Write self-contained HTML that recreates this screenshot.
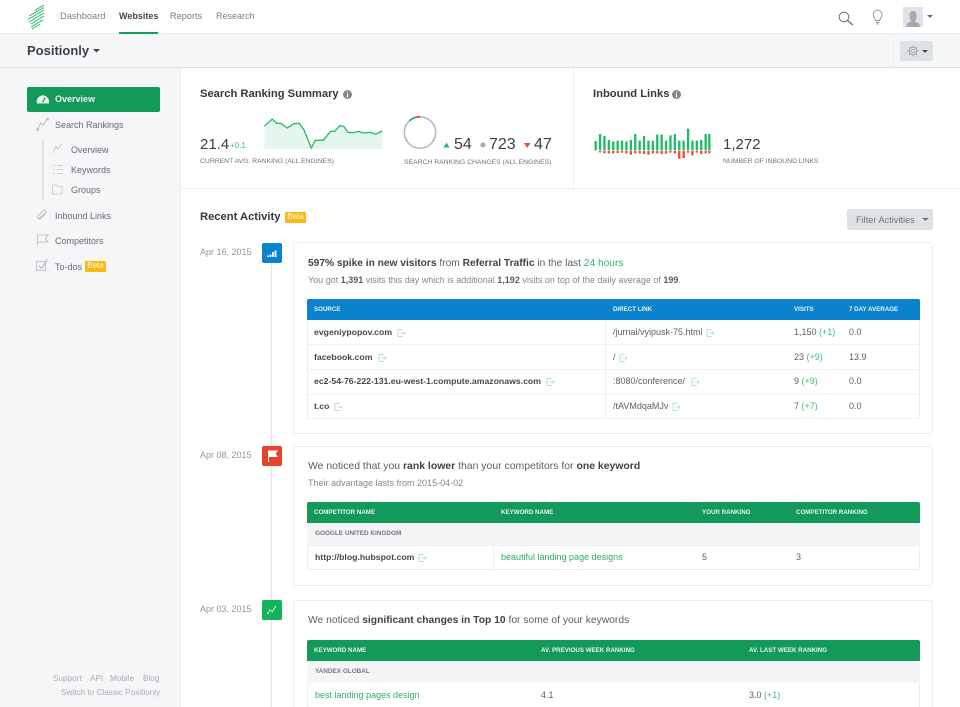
<!DOCTYPE html>
<html><head><meta charset="utf-8"><style>
html,body{margin:0;padding:0;width:960px;height:707px;overflow:hidden;background:#fff}
body{position:relative;font-family:"Liberation Sans",sans-serif;color:#3f434b;font-size:9px}
.t{position:absolute;white-space:nowrap;line-height:12px}
.b{position:absolute}
b{font-weight:700}
.g{color:#3bbf73}
.nav{font-size:9.3px;color:#7b8087}
.side{font-size:9px;color:#666b73}
.h{font-size:11.2px;font-weight:700;color:#33373e}
.cap{font-size:6.8px;color:#6e727a}
.num{font-size:16px;line-height:16px;color:#3a3e45}
.th{font-size:6.2px;font-weight:700;color:#e8f3ee}
.td{font-size:9px;color:#5c6068}
.tb{font-size:8.7px;font-weight:700;color:#44484f}
.date{font-size:9px;color:#92969c}
.card{position:absolute;left:293px;width:640px;background:#fff;border:1px solid #eeeff1;border-radius:2px;box-sizing:border-box}
.sub{font-size:9px;color:#83878e}
.head{font-size:10.2px;color:#5a5e66}
.head b{color:#3f434b}
.beta{position:absolute;background:#fdb813;color:#fff;font-size:8px;line-height:10px;height:11px;border-radius:1px;text-align:center}
.foot{font-size:8.2px;color:#a9acb1}
.gl{font-size:6.4px;font-weight:700;color:#73777e}
</style></head><body>

<div class="b" style="left:0;top:0;width:960px;height:34px;background:#fff"></div>
<div class="b" style="left:0;top:33px;width:960px;height:35px;background:#f6f7f8;border-top:1px solid #eeeff0;border-bottom:1px solid #dcdde0;box-sizing:border-box"></div>
<div class="b" style="left:0;top:68px;width:181px;height:639px;background:#f5f6f8;border-right:1px solid #eaebed;box-sizing:border-box"></div>
<div class="b" style="left:119px;top:32px;width:39px;height:2px;background:#13a05a"></div>
<div class="b" style="left:893px;top:34px;width:1px;height:33px;background:#eeeff0"></div>
<div class="b" style="left:900px;top:41px;width:33px;height:20px;background:#dfe2e5;border-radius:2px"></div>
<div class="b" style="left:181px;top:188px;width:779px;height:1px;background:#eeeff1"></div>
<div class="b" style="left:573px;top:68px;width:1px;height:120px;background:#eeeff1"></div>
<div class="b" style="left:27px;top:87px;width:133px;height:25px;background:#13995a;border-radius:2px"></div>
<div class="b" style="left:42px;top:140px;width:1.5px;height:60px;background:#dfe1e5"></div>
<div class="b" style="left:847px;top:209px;width:86px;height:21px;background:#dfe2e5;border-radius:2px"></div>
<div class="b" style="left:271px;top:262px;width:1px;height:445px;background:#dfe3ee"></div>

<div class="b" style="left:262px;top:243px;width:20px;height:20px;background:#0a82cd;border-radius:2px"></div>
<div class="b" style="left:262px;top:446px;width:20px;height:20px;background:#e8432f;border-radius:2px"></div>
<div class="b" style="left:262px;top:600px;width:20px;height:20px;background:#13b25f;border-radius:2px"></div>

<div class="card" style="top:242px;height:192px"></div>
<div class="card" style="top:446px;height:140px"></div>
<div class="card" style="top:600px;height:120px"></div>

<!-- table 1 -->
<div class="b" style="left:307px;top:299px;width:613px;height:21px;background:#0a82cd;border-radius:2px 2px 0 0"></div>
<div class="b" style="left:307px;top:320px;width:613px;height:99px;border:1px solid #eeeff1;border-top:0;box-sizing:border-box"></div>
<div class="b" style="left:308px;top:344px;width:611px;height:1px;background:#f0f1f3"></div>
<div class="b" style="left:308px;top:369px;width:611px;height:1px;background:#f0f1f3"></div>
<div class="b" style="left:308px;top:394px;width:611px;height:1px;background:#f0f1f3"></div>
<div class="b" style="left:605px;top:320px;width:1px;height:98px;background:#eeeff1"></div>

<!-- table 2 -->
<div class="b" style="left:307px;top:502px;width:613px;height:21px;background:#13995a;border-radius:2px 2px 0 0"></div>
<div class="b" style="left:307px;top:523px;width:613px;height:22px;background:#f4f5f7"></div>
<div class="b" style="left:307px;top:545px;width:613px;height:25px;border:1px solid #eeeff1;box-sizing:border-box"></div>
<div class="b" style="left:493px;top:545px;width:1px;height:25px;background:#eeeff1"></div>

<!-- table 3 -->
<div class="b" style="left:307px;top:640px;width:613px;height:21px;background:#13995a;border-radius:2px 2px 0 0"></div>
<div class="b" style="left:307px;top:661px;width:613px;height:22px;background:#f4f5f7"></div>
<div class="b" style="left:307px;top:683px;width:613px;height:24px;border-left:1px solid #eeeff1;border-right:1px solid #eeeff1;box-sizing:border-box"></div>

<svg class="b" style="left:0;top:0" width="960" height="707" viewBox="0 0 960 707" fill="none">
<!-- logo -->
<path d="M35 10.400 L44 5 M29 16 L44 7.500 M28 19.500 L44 10 M29 22 L44 13 M31 24 L44 16 M31 27 L43 19.800 M32 29 L40 24" stroke="#1fb56a" stroke-width="1"/>
<!-- search -->
<g stroke="#7a7e85"><circle cx="844" cy="17" r="4.800" stroke-width="1.100"/><path d="M847.600 20.600 L853 25" stroke-width="1.500"/></g>
<!-- bulb -->
<g stroke="#8b8f95" stroke-width=".9"><path d="M875.500 20.500 C875.500 18.500 873.200 17.500 873.200 14.500 A4.400 4.400 0 0 1 882 14.500 C882 17.500 879.700 18.500 879.700 20.500 Z"/><path d="M875.800 22.500 H879.400 M876.500 24 H878.700"/></g>
<!-- avatar -->
<rect x="903" y="7" width="20" height="20" fill="#dfe3e8"/>
<path d="M906 27 C906 23 909 22.500 911 21.500 C910 19.500 909.500 18 909.500 15.500 C909.500 12.500 911 11 913 11 C915 11 916.500 12.500 916.500 15.500 C916.500 18 916 19.500 915 21.500 C917 22.500 920 23 920 27 Z" fill="#a7abb1"/>
<path d="M927 15 H933 L930 18 Z" fill="#6a6e75"/>
<!-- gear -->
<circle cx="913" cy="51" r="3.800" stroke="#9a9ea4" stroke-width=".9"/><circle cx="913" cy="51" r="1.600" stroke="#9a9ea4" stroke-width=".7"/>
<path d="M913 45.500 V47.200 M913 54.800 V56.500 M907.500 51 H909.200 M916.800 51 H918.500 M909.100 47.100 L910.300 48.300 M915.700 53.700 L916.900 54.900 M916.900 47.100 L915.700 48.300 M910.300 53.700 L909.100 54.900" stroke="#9a9ea4" stroke-width=".9"/>
<path d="M922 50 H928 L925 52.700 Z" fill="#3f434b"/>
<path d="M93 49 H100 L96.500 52.500 Z" fill="#444"/>
<path d="M922 218 H929 L925.500 220.800 Z" fill="#686c73"/>
<!-- overview gauge -->
<path d="M37 103.500 A6.200 6.200 0 1 1 48.800 103.500 Z" fill="#e8f6ef"/><path d="M42.500 102.500 L45 97.500" stroke="#13995a" stroke-width="1.200"/>
<!-- side icons -->
<g stroke="#b0b4ba" stroke-width=".8">
<path d="M37.500 129.500 L41 122.500 L43 125.500 L47 119"/><circle cx="37.500" cy="129.500" r=".9"/><circle cx="47.500" cy="119" r=".9"/>
<path d="M53 153 L56 146.500 L58 149 L61.500 144" stroke="#bcc0c5"/>
<path d="M57 165.500 H63 M57 169.500 H63 M57 173.500 H63 M53 165.500 H55 M53 169.500 H55 M53 173.500 H55" stroke="#c2c6cb"/>
<path d="M52.500 185 H57 L58 186.500 H62 V194 H52.500 Z" stroke="#c2c6cb"/>
<path d="M38.500 219 L46 212.500 A1.700 1.700 0 0 0 43.500 210.500 L38 216 A1.700 1.700 0 0 0 40.500 218.500 L45 214"/>
<path d="M37.500 245.500 V235 H48 L45.500 238.500 L48 242 H38"/>
<path d="M36.500 261.500 H45.500 V270.500 H36.500 Z"/><path d="M39 265.500 L41.500 268.500 L47.500 259" stroke-width="1"/>
</g>
<!-- info icons -->
<circle cx="347.500" cy="94.500" r="4.500" fill="#83878e"/><circle cx="676.500" cy="94.500" r="4.500" fill="#83878e"/>
<path d="M347.500 93.500 V97.500 M347.500 91.500 V92.500 M676.500 93.500 V97.500 M676.500 91.500 V92.500" stroke="#fff" stroke-width="1"/>
<!-- sparkline -->
<g transform="translate(180 70) scale(.3333)">
<path d="M253 168 L277 147 L290 160 L302 160 L322 174 L342 161 L358 160 L372 180 L394 234 L406 211 L430 211 L452 184 L464 184 L480 167 L492 170 L504 187 L520 188 L536 184 L548 189 L572 187 L586 193 L607 183 V237 H253 Z" fill="#e5f6ec"/>
<path d="M253 168 L277 147 L290 160 L302 160 L322 174 L342 161 L358 160 L372 180 L394 234 L406 211 L430 211 L452 184 L464 184 L480 167 L492 170 L504 187 L520 188 L536 184 L548 189 L572 187 L586 193 L607 183" stroke="#24bd68" stroke-width="4"/>
</g>
<!-- donut -->
<circle cx="420" cy="132.500" r="15.700" stroke="#b4b9c0" stroke-width="1.600"/>
<path d="M409.500 120.800 A15.700 15.700 0 0 1 416 117.300" stroke="#24bd68" stroke-width="1.800"/>
<path d="M415.500 117.400 A15.700 15.700 0 0 1 420 116.800" stroke="#ee4a33" stroke-width="1.800"/>
<path d="M443.500 147.500 H449.500 L446.500 142.500 Z" fill="#1fb56a"/>
<circle cx="483" cy="145" r="2.500" fill="#a7abb1"/>
<path d="M524 143 H530.500 L527.200 148 Z" fill="#ee4a33"/>
<!-- bars -->
<g transform="translate(570 70) scale(.3333)">
<path stroke-width="7" stroke="#1fbb64" d="M77 213V241M90.200 192V241M103.400 198V241M116.600 210V241M129.800 214V241M143 212V241M156.200 212V241M169.400 214V241M182.600 210V241M195.800 192V241M209 212V241M222.200 198V241M235.400 212V241M248.600 212V241M261.800 194V241M275 194V241M288.200 212V241M301.400 196V241M314.600 192V241M327.800 212V241M341 212V241M354.200 176V241M367.400 212V241M380.600 212V241M393.800 210V241M407 192V241M418 192V241"/>
<path stroke-width="7" stroke="#ee4a33" d="M90.200 243V247M103.400 243V250M116.600 243V250M129.800 243V250M143 243V249M156.200 243V248M169.400 243V250M182.600 243V254M195.800 243V250M209 243V250M222.200 243V252M235.400 243V254M248.600 243V250M261.800 243V250M275 243V252M288.200 243V251M301.400 243V248M314.600 243V250M327.800 243V266M341 243V264M354.200 243V248M367.400 243V256M380.600 243V248M393.800 243V252M407 243V250M418 243V250"/>
</g>
<!-- timeline icons -->
<path d="M268 257 V255.500 M270.500 257 V254.500 M273 257 V252 M275.500 257 V250.500" stroke="#fff" stroke-width="1.800"/>
<path d="M268.500 462 V451 H277 L275 453.500 L277 456.500 H268.500" fill="#fff" stroke="#fff" stroke-width="1"/>
<path d="M267.500 614 L270 610 L272.500 611.500 L276 605.500" stroke="#fff" stroke-width="1.200" stroke-dasharray="2 1"/>
<!-- link icons -->
<g stroke="#a8dcc0" stroke-width=".8">
<path id="l" d="M403 329.500 H398 V336.500 H403 M400.500 333 H405 M403.500 331.500 L405 333 L403.500 334.500"/>
<use href="#l" x="-19" y="25"/>
<use href="#l" x="149" y="49"/>
<use href="#l" x="-63" y="74"/>
<use href="#l" x="309" y="0"/>
<use href="#l" x="222" y="25"/>
<use href="#l" x="294" y="49"/>
<use href="#l" x="275" y="74"/>
<use href="#l" x="21" y="225"/>
</g>
</svg>

<!-- top nav -->
<div class="t nav" style="left:60px;top:10px">Dashboard</div>
<div class="t nav" style="left:119px;top:10px;color:#43474e;font-weight:700;font-size:9px">Websites</div>
<div class="t nav" style="left:170px;top:10px;font-size:9.2px">Reports</div>
<div class="t nav" style="left:216px;top:10px;font-size:9px">Research</div>
<div class="t" style="left:27px;top:43px;font-size:13px;font-weight:700;line-height:15px;color:#3a3e45">Positionly</div>

<!-- sidebar -->
<div class="t" style="left:55px;top:93px;font-size:9px;font-weight:700;color:#eaf6f0">Overview</div>
<div class="t side" style="left:55px;top:119px">Search Rankings</div>
<div class="t side" style="left:71px;top:144px">Overview</div>
<div class="t side" style="left:71px;top:164px">Keywords</div>
<div class="t side" style="left:71px;top:184px">Groups</div>
<div class="t side" style="left:55px;top:210px">Inbound Links</div>
<div class="t side" style="left:55px;top:235px">Competitors</div>
<div class="t side" style="left:55px;top:261px">To-dos</div>
<div class="beta" style="left:85px;top:261px;width:21px">Beta</div>
<div class="t foot" style="left:53px;top:673px">Support</div>
<div class="t foot" style="left:90px;top:673px">API</div>
<div class="t foot" style="left:110px;top:673px">Mobile</div>
<div class="t foot" style="left:143px;top:673px">Blog</div>
<div class="t foot" style="left:61px;top:687px">Switch to Classic Positionly</div>

<!-- summary -->
<div class="t h" style="left:200px;top:88px">Search Ranking Summary</div>
<div class="t h" style="left:593px;top:88px">Inbound Links</div>
<div class="t num" style="left:200px;top:137px;font-size:15px">21.4</div>
<div class="t g" style="left:230px;top:140px;font-size:8px">+0.1</div>
<div class="t cap" style="left:200px;top:156px">CURRENT AVG. RANKING (ALL ENGINES)</div>
<div class="t num" style="left:454px;top:137px">54</div>
<div class="t num" style="left:489px;top:137px">723</div>
<div class="t num" style="left:534px;top:137px">47</div>
<div class="t cap" style="left:404px;top:157px">SEARCH RANKING CHANGES (ALL ENGINES)</div>
<div class="t num" style="left:723px;top:137px;font-size:15px">1,272</div>
<div class="t cap" style="left:723px;top:156px">NUMBER OF INBOUND LINKS</div>

<!-- recent -->
<div class="t h" style="left:200px;top:211px">Recent Activity</div>
<div class="beta" style="left:285px;top:212px;width:21px">Beta</div>
<div class="t" style="left:856px;top:214px;font-size:9.2px;color:#6c7178">Filter Activities</div>

<div class="t date" style="left:200px;top:246px">Apr 16, 2015</div>
<div class="t date" style="left:200px;top:449px">Apr 08, 2015</div>
<div class="t date" style="left:200px;top:603px">Apr 03, 2015</div>

<!-- card 1 -->
<div class="t head" style="left:308px;top:258px"><b>597% spike in new visitors</b> from <b>Referral Traffic</b> in the last <span style="color:#2db56c">24 hours</span></div>
<div class="t sub" style="left:308px;top:274px">You got <b style="color:#5a5e66">1,391</b> visits this day which is additional <b style="color:#5a5e66">1,192</b> visits on top of the daily average of <b style="color:#5a5e66">199</b>.</div>
<div class="t th" style="left:314px;top:304px">SOURCE</div>
<div class="t th" style="left:613px;top:304px">DIRECT LINK</div>
<div class="t th" style="left:794px;top:304px">VISITS</div>
<div class="t th" style="left:849px;top:304px">7 DAY AVERAGE</div>
<div class="t tb" style="left:314px;top:326px">evgeniypopov.com</div>
<div class="t tb" style="left:314px;top:351px">facebook.com</div>
<div class="t tb" style="left:314px;top:375px">ec2-54-76-222-131.eu-west-1.compute.amazonaws.com</div>
<div class="t tb" style="left:314px;top:400px">t.co</div>
<div class="t td" style="left:613px;top:326px">/jurnal/vyipusk-75.html</div>
<div class="t td" style="left:613px;top:351px">/</div>
<div class="t td" style="left:613px;top:375px">:8080/conference/</div>
<div class="t td" style="left:613px;top:400px">/tAVMdqaMJv</div>
<div class="t td" style="left:794px;top:326px">1,150 <span class="g">(+1)</span></div>
<div class="t td" style="left:794px;top:351px">23 <span class="g">(+9)</span></div>
<div class="t td" style="left:794px;top:375px">9 <span class="g">(+9)</span></div>
<div class="t td" style="left:794px;top:400px">7 <span class="g">(+7)</span></div>
<div class="t td" style="left:849px;top:326px">0.0</div>
<div class="t td" style="left:849px;top:351px">13.9</div>
<div class="t td" style="left:849px;top:375px">0.0</div>
<div class="t td" style="left:849px;top:400px">0.0</div>

<!-- card 2 -->
<div class="t head" style="left:308px;top:461px;font-size:10.45px">We noticed that you <b>rank lower</b> than your competitors for <b>one keyword</b></div>
<div class="t sub" style="left:308px;top:477px">Their advantage lasts from 2015-04-02</div>
<div class="t th" style="left:314px;top:507px">COMPETITOR NAME</div>
<div class="t th" style="left:501px;top:507px">KEYWORD NAME</div>
<div class="t th" style="left:702px;top:507px">YOUR RANKING</div>
<div class="t th" style="left:796px;top:507px">COMPETITOR RANKING</div>
<div class="t gl" style="left:315px;top:528px">GOOGLE UNITED KINGDOM</div>
<div class="t tb" style="left:315px;top:551px">http://blog.hubspot.com</div>
<div class="t" style="left:501px;top:551px;font-size:9px;color:#2fae6a">beautiful landing page designs</div>
<div class="t td" style="left:702px;top:551px">5</div>
<div class="t td" style="left:796px;top:551px">3</div>

<!-- card 3 -->
<div class="t head" style="left:308px;top:615px;font-size:10.3px">We noticed <b>significant changes in Top 10</b> for some of your keywords</div>
<div class="t th" style="left:314px;top:645px">KEYWORD NAME</div>
<div class="t th" style="left:541px;top:645px">AV. PREVIOUS WEEK RANKING</div>
<div class="t th" style="left:749px;top:645px">AV. LAST WEEK RANKING</div>
<div class="t gl" style="left:315px;top:666px">YANDEX GLOBAL</div>
<div class="t" style="left:315px;top:689px;font-size:9px;color:#2fae6a">best landing pages design</div>
<div class="t td" style="left:541px;top:689px">4.1</div>
<div class="t td" style="left:749px;top:689px">3.0 <span class="g">(+1)</span></div>

</body></html>
